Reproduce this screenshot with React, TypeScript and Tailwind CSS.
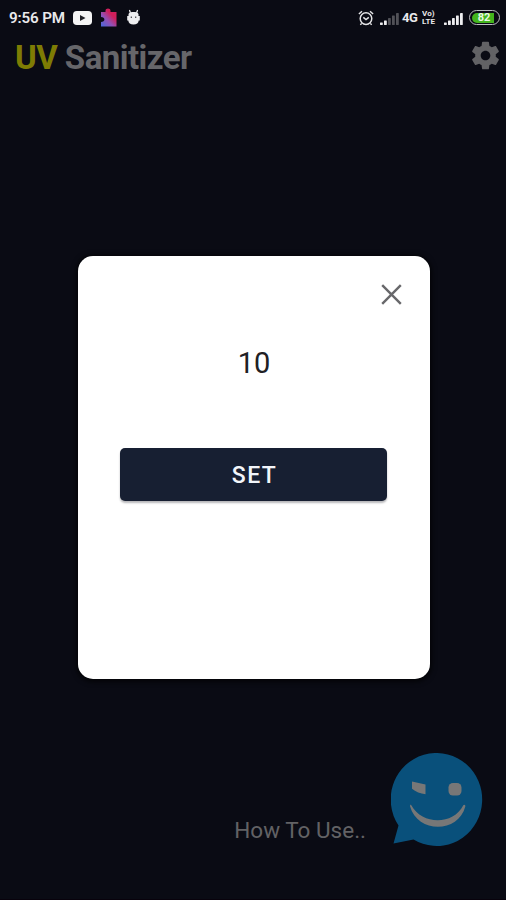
function AlarmIcon() {
  return (
    <svg className="h-4 w-4" viewBox="0 0 16 16" fill="none" stroke="#e4e4e6" strokeWidth="1.5">
      <circle cx="8" cy="8.6" r="5.8" />
      <path d="M5.3 7.4 8 9.6l2.8-2.3" />
      <path d="M.9 4 4 1.3M15.1 4 12 1.3M3.6 13.4l-1.2 1.5M12.4 13.4l1.2 1.5" />
    </svg>
  );
}

function Signal({ weak }: { weak?: boolean }) {
  const bars = [
    [0, 10.5, 2.5],
    [4, 8.5, 4.5],
    [8, 6, 7],
    [12, 3.5, 9.5],
    [16, 1, 12],
  ];
  return (
    <svg className="h-[13px] w-[19px]" viewBox="0 0 19 13">
      {bars.map(([x, y, h], i) => (
        <rect key={x} x={x} y={y} width="2.8" height={h} rx=".4" fill={weak && i > 1 ? "#515157" : "#ededef"} />
      ))}
    </svg>
  );
}

function StatusBar() {
  return (
    <header className="flex h-[35px] items-center pl-[9px] pr-[6px] text-[#e9e9eb]">
      <span className="w-[64px] whitespace-nowrap text-[15.2px] font-semibold leading-[18px] tracking-[-0.15px]">9:56 PM</span>
      <svg className="h-[14px] w-[19px]" viewBox="0 0 19 14">
        <rect width="19" height="14" rx="3.8" fill="#f4f4f4" />
        <path d="m7 4 5.5 3L7 10Z" fill="#202026" />
      </svg>
      <svg className="ml-2 mb-[1px] h-[19px] w-[17px]" viewBox="0 0 17 19">
        <defs>
          <linearGradient id="piece" x1="1" y1="0" x2="0.1" y2="1">
            <stop offset=".35" stopColor="#d01f5b" />
            <stop offset=".65" stopColor="#9250b5" />
            <stop offset="1" stopColor="#5065d7" />
          </linearGradient>
        </defs>
        <path d="M1 4h4.500V2.800c0-3.200 5-3.200 5 0V4H16.500v14.500H1V14c4.500 0 4.500-5 0-5Z" fill="url(#piece)" />
      </svg>
      <svg className="ml-[9px] mb-[2px] h-[16px] w-[15px]" viewBox="0 0 15 16">
        <path d="M4.300 3.500 3.600 1.500M10.700 3.500l.7-2" stroke="#eeeef0" strokeWidth="1.3" strokeLinecap="round" />
        <path d="M2.500 5c1-2.600 9-2.600 10 0v2h1.300v4.500H12.700c-.2 2.500-2 4-5.200 4s-5-1.500-5.200-4H1.200V7h1.300Z" fill="#eeeef0" />
        <path d="M4.700 7.500H6V9H4.700zM9 7.500h1.300V9H9z" fill="#55555b" />
      </svg>
      <div className="ml-auto flex items-center">
        <AlarmIcon />
        <div className="ml-[6px] mt-[1px]"><Signal weak /></div>
        <span className="ml-[3px] w-[17px] whitespace-nowrap text-[13px] font-bold leading-4 tracking-[-0.4px]">4G</span>
        <span className="ml-[3px] flex w-[16px] flex-col text-[8px] font-bold leading-[8px] tracking-[0.1px]">
          <span className="h-[8px] overflow-hidden whitespace-nowrap">Vo)</span>
          <span className="h-[8px] overflow-hidden whitespace-nowrap">LTE</span>
        </span>
        <div className="ml-[6px] mt-[1px]"><Signal /></div>
        <div className="ml-[6px] flex h-[15px] w-[31px] items-center rounded-full border-[1.5px] border-[#bbbcc0] p-[2px]">
          <div className="flex h-[10px] w-[22px] items-center justify-center rounded-l-full rounded-r-[2px] bg-[#43b51d] pl-[2px] text-[11px] font-bold leading-[10px] text-[#e9f9e4]">82</div>
        </div>
      </div>
    </header>
  );
}

function GearIcon() {
  return (
    <svg className="h-[33px] w-[33px]" viewBox="0 0 24 24" fill="#626265">
      <path d="M19.43 12.98c.04-.32.07-.64.07-.98s-.03-.66-.07-.98l2.11-1.65c.19-.15.24-.42.12-.64l-2-3.46c-.12-.22-.39-.3-.61-.22l-2.49 1c-.52-.4-1.08-.73-1.69-.98l-.38-2.65C14.46 2.18 14.25 2 14 2h-4c-.25 0-.46.18-.49.42l-.38 2.65c-.61.25-1.17.59-1.69.98l-2.49-1c-.23-.09-.49 0-.61.22l-2 3.46c-.13.22-.07.49.12.64l2.11 1.65c-.04.32-.07.65-.07.98s.03.66.07.98l-2.11 1.65c-.19.15-.24.42-.12.64l2 3.46c.12.22.39.3.61.22l2.49-1c.52.4 1.08.73 1.69.98l.38 2.65c.03.24.24.42.49.42h4c.25 0 .46-.18.49-.42l.38-2.65c.61-.25 1.17-.59 1.69-.98l2.49 1c.23.09.49 0 .61-.22l2-3.46c.12-.22.07-.49-.12-.64l-2.11-1.65zM12 15.5c-1.93 0-3.5-1.57-3.5-3.5s1.57-3.5 3.5-3.5 3.5 1.57 3.5 3.5-1.57 3.5-3.5 3.5z" />
    </svg>
  );
}

function ChatFace() {
  return (
    <svg className="h-[94px] w-[92px]" viewBox="0 0 92 94">
      <path d="M46.500 0a45.500 46.500 0 1 1-24 86.500L2.500 90.500l5-18A45.500 46.500 0 0 1 46.500 0Z" fill="#09507b" />
      <path d="M21 28.500 34.500 31.500v9.800c-5-.5-10-2.500-13.500-5.500Z" fill="#777777" />
      <rect x="57.500" y="30" width="13" height="12.500" rx="4.500" fill="#777777" />
      <path d="M20.300 52.300c11 20 42 20 52 0 .8-1.200 2.400-.3 2 1.200C67.500 80.500 26.500 80.500 19.100 53.500c-.3-1.600.600-2.200 1.200-1.200Z" fill="#777777" />
    </svg>
  );
}

export default function App() {
  return (
    <main className="relative flex h-[900px] w-[506px] flex-col overflow-hidden border-b border-[#08020c] bg-[#0a0b14] font-['Roboto','Liberation_Sans',sans-serif]">
      <StatusBar />
      <div className="flex h-[46px] items-center justify-between pl-[15px] pr-[4px]">
        <h1 className="whitespace-nowrap text-[33px] font-bold leading-[38px] tracking-[-0.55px] text-[#66666a]">
          <span className="text-[#7e7c04]">UV</span> Sanitizer
        </h1>
        <button aria-label="Settings" className="mb-[6px]"><GearIcon /></button>
      </div>
      <div className="mt-auto flex items-end justify-end pb-[52px] pr-[23px]">
        <span className="mb-[3px] mr-[25px] whitespace-nowrap text-[22.5px] leading-[28px] text-[#626265]">How To Use..</span>
        <ChatFace />
      </div>
      <section role="dialog" className="absolute left-[78px] top-[256px] flex h-[423px] w-[352px] flex-col items-center rounded-[15px] bg-white shadow-[0_1px_5px_2px_rgba(0,0,0,0.65)]">
        <button aria-label="Close" className="mr-[28px] mt-[28px] self-end">
          <svg className="h-[21px] w-[21px]" viewBox="0 0 21 21" stroke="#68686b" strokeWidth="2.4">
            <path d="m1.200 1.200 18.600 18.600M19.800 1.200 1.200 19.800" />
          </svg>
        </button>
        <div className="mt-[40px] text-[29px] leading-[36px] text-[#202024]">10</div>
        <button className="mr-[1px] mt-[67px] h-[53px] w-[267px] rounded-[5px] bg-[#171f32] pl-[2px] pt-[3px] text-[23px] font-medium tracking-[1.4px] text-[#f2f5fa] shadow-[0_2px_2px_rgba(20,20,30,0.3)]">SET</button>
      </section>
    </main>
  );
}
